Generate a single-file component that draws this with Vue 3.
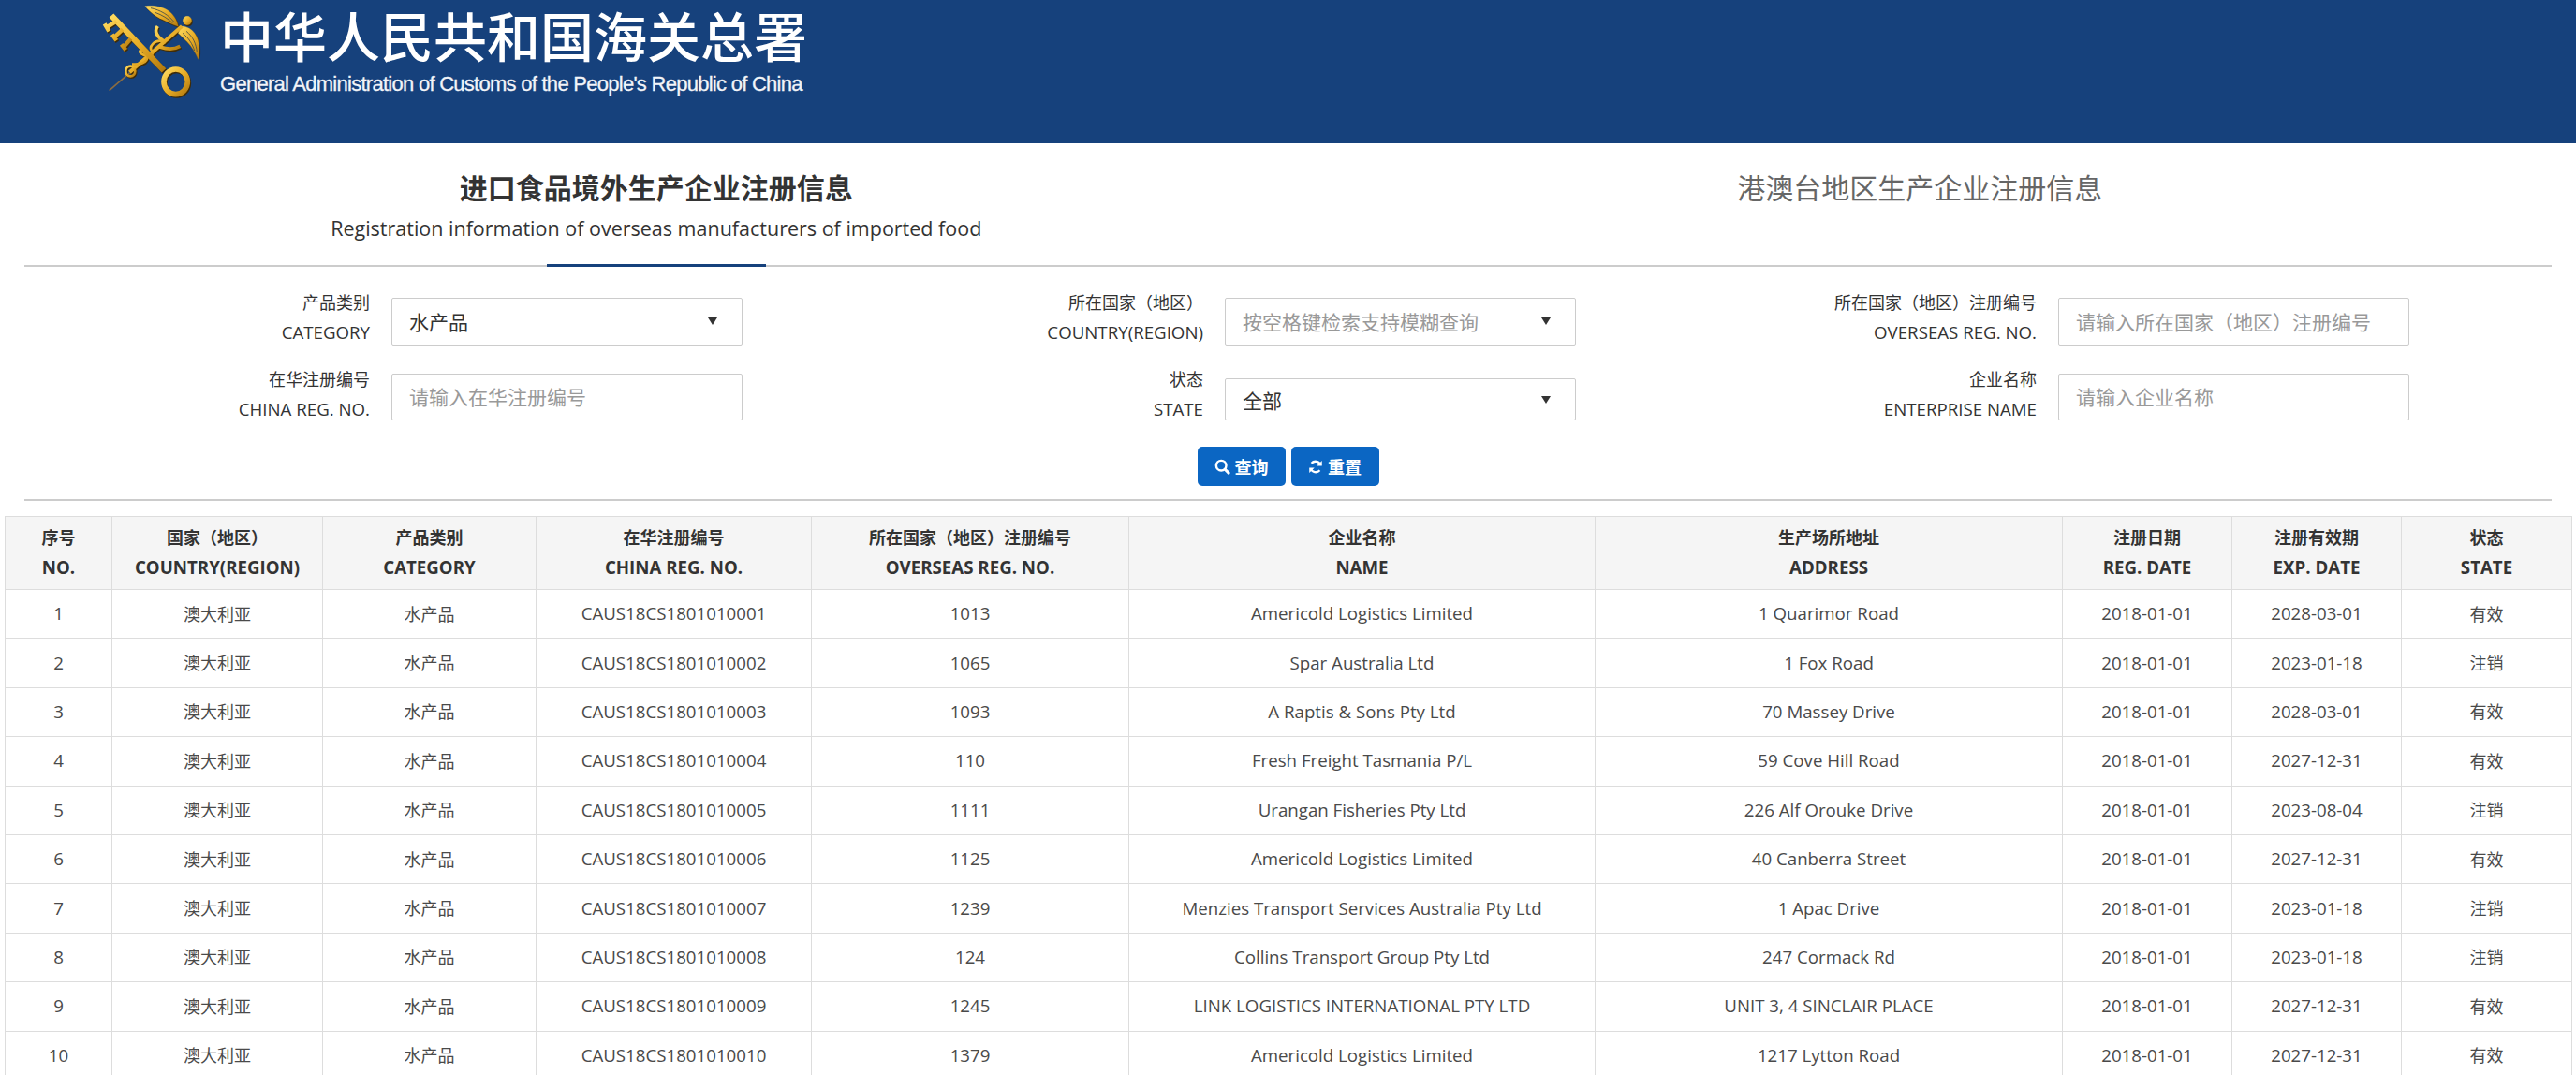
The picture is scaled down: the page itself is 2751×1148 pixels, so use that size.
<template>
  <div class="page">
    <header class="site-header">
      <svg class="logo" viewBox="0 0 330 330" width="110" height="110">
        <defs>
          <linearGradient id="gold" x1="0" y1="0" x2="1" y2="1">
            <stop offset="0" stop-color="#ffdc60" />
            <stop offset="0.55" stop-color="#e6aa24" />
            <stop offset="1" stop-color="#b27a10" />
          </linearGradient>
          <g id="emblem">
            <path d="M150 20C195 14 245 30 256 85C236 78 222 70 205 62C185 54 165 38 150 20Z" />
            <path d="M268 84C310 88 332 130 320 190C312 170 300 150 286 135C276 125 265 115 256 106Z" />
            <circle cx="285" cy="66" r="14" />
            <path d="M100 232L268 84" fill="none" stroke-width="12" />
            <path d="M190 84C178 100 186 118 216 136M262 148C240 160 222 158 196 150" fill="none" stroke-width="11" />
            <path d="M205 132C180 126 160 150 172 164C184 178 152 182 138 172C122 162 146 152 156 178C160 206 126 206 108 206" fill="none" stroke-width="8" />
            <ellipse cx="103" cy="228" rx="15" ry="16" fill="none" stroke-width="8" />
            <path d="M42 50L210 226" fill="none" stroke-width="19" />
            <path d="M58 68L26 88M78 94L50 120M104 124L80 152M20 76L34 100M44 110L58 130M74 142L88 160" fill="none" stroke-width="13" />
            <ellipse cx="248" cy="262" rx="38" ry="40" fill="none" stroke-width="17" />
          </g>
        </defs>
        <path d="M35 290L102 232" stroke="#8a6c42" stroke-width="5" fill="none" />
        <use href="#emblem" transform="translate(3 4)" fill="#3f2c08" stroke="#3f2c08" />
        <use href="#emblem" fill="url(#gold)" stroke="url(#gold)" />
        <path d="M168 26C198 32 226 48 244 72M182 40C204 48 224 60 238 74M282 100C302 116 314 140 316 168M270 106C290 122 302 142 308 162" fill="none" stroke="#5b5a45" stroke-width="3" />
      </svg>
      <div class="brand">
        <div class="brand-cn">中华人民共和国海关总署</div>
        <div class="brand-en">General Administration of Customs of the People's Republic of China</div>
      </div>
    </header>

    <nav class="tabs">
      <div class="tab active">
        <div class="tab-title">进口食品境外生产企业注册信息</div>
        <div class="tab-sub">Registration information of overseas manufacturers of imported food</div>
      </div>
      <div class="tab">
        <div class="tab-title">港澳台地区生产企业注册信息</div>
      </div>
    </nav>

    <form class="filters" @submit.prevent>
      <div v-for="f in fields" :key="f.cn" class="field">
        <label class="field-label">
          <span>{{ f.cn }}</span>
          <span class="latin">{{ f.en }}</span>
        </label>
        <div v-if="f.type === 'select'" class="control select" :class="f.cls">
          <span :class="{ hint: f.hint }">{{ f.value }}</span>
          <i class="caret"></i>
        </div>
        <input v-else class="control" :class="f.cls" type="text" :placeholder="f.value" />
      </div>
    </form>

    <div class="actions">
      <button class="btn" type="button">
        <svg viewBox="0 0 18 18" width="17" height="17">
          <circle cx="7.6" cy="7.6" r="5.6" fill="none" stroke="#fff" stroke-width="2.6" />
          <path d="M11.8 11.8L16 16" stroke="#fff" stroke-width="3.2" stroke-linecap="round" />
        </svg>
        查询
      </button>
      <button class="btn" type="button">
        <svg viewBox="0 0 18 18" width="16" height="17">
          <path d="M15 7A6.4 6.4 0 0 0 4 4.8" fill="none" stroke="#fff" stroke-width="2.6" />
          <path d="M3 11A6.4 6.4 0 0 0 14 13.2" fill="none" stroke="#fff" stroke-width="2.6" />
          <path d="M16.6 1.6V8H10.4Z" fill="#fff" />
          <path d="M1.4 16.4V10H7.6Z" fill="#fff" />
        </svg>
        重置
      </button>
    </div>

    <table class="grid">
      <colgroup>
        <col v-for="c in columns" :key="c.en" :style="{ width: c.width + 'px' }" />
      </colgroup>
      <thead>
        <tr>
          <th v-for="c in columns" :key="c.en">
            <div>{{ c.cn }}</div>
            <div class="latin">{{ c.en }}</div>
          </th>
        </tr>
      </thead>
      <tbody>
        <tr v-for="(r, i) in rows" :key="r[0]">
          <td class="latin">{{ i + 1 }}</td>
          <td>澳大利亚</td>
          <td>水产品</td>
          <td class="latin">{{ 'CAUS18CS18010100' + String(i + 1).padStart(2, '0') }}</td>
          <td v-for="(cell, j) in r.slice(0, 5)" :key="j" class="latin">{{ cell }}</td>
          <td>{{ r[5] }}</td>
        </tr>
      </tbody>
    </table>
  </div>
</template>

<script setup>
const fields = [
  { cn: '产品类别', en: 'CATEGORY', type: 'select', value: '水产品' },
  { cn: '所在国家（地区）', en: 'COUNTRY(REGION)', type: 'select', value: '按空格键检索支持模糊查询', hint: true },
  { cn: '所在国家（地区）注册编号', en: 'OVERSEAS REG. NO.', type: 'input', value: '请输入所在国家（地区）注册编号' },
  { cn: '在华注册编号', en: 'CHINA REG. NO.', type: 'input', value: '请输入在华注册编号', cls: 'second' },
  { cn: '状态', en: 'STATE', type: 'select', value: '全部', cls: 'short' },
  { cn: '企业名称', en: 'ENTERPRISE NAME', type: 'input', value: '请输入企业名称', cls: 'second' },
]

const columns = [
  { cn: '序号', en: 'NO.', width: 114 },
  { cn: '国家（地区）', en: 'COUNTRY(REGION)', width: 225 },
  { cn: '产品类别', en: 'CATEGORY', width: 228 },
  { cn: '在华注册编号', en: 'CHINA REG. NO.', width: 294 },
  { cn: '所在国家（地区）注册编号', en: 'OVERSEAS REG. NO.', width: 339 },
  { cn: '企业名称', en: 'NAME', width: 498 },
  { cn: '生产场所地址', en: 'ADDRESS', width: 499 },
  { cn: '注册日期', en: 'REG. DATE', width: 181 },
  { cn: '注册有效期', en: 'EXP. DATE', width: 181 },
  { cn: '状态', en: 'STATE', width: 182 },
]

const rows = [
  ['1013', 'Americold Logistics Limited', '1 Quarimor Road', '2018-01-01', '2028-03-01', '有效'],
  ['1065', 'Spar Australia Ltd', '1 Fox Road', '2018-01-01', '2023-01-18', '注销'],
  ['1093', 'A Raptis & Sons Pty Ltd', '70 Massey Drive', '2018-01-01', '2028-03-01', '有效'],
  ['110', 'Fresh Freight Tasmania P/L', '59 Cove Hill Road', '2018-01-01', '2027-12-31', '有效'],
  ['1111', 'Urangan Fisheries Pty Ltd', '226 Alf Orouke Drive', '2018-01-01', '2023-08-04', '注销'],
  ['1125', 'Americold Logistics Limited', '40 Canberra Street', '2018-01-01', '2027-12-31', '有效'],
  ['1239', 'Menzies Transport Services Australia Pty Ltd', '1 Apac Drive', '2018-01-01', '2023-01-18', '注销'],
  ['124', 'Collins Transport Group Pty Ltd', '247 Cormack Rd', '2018-01-01', '2023-01-18', '注销'],
  ['1245', 'LINK LOGISTICS INTERNATIONAL PTY LTD', 'UNIT 3, 4 SINCLAIR PLACE', '2018-01-01', '2027-12-31', '有效'],
  ['1379', 'Americold Logistics Limited', '1217 Lytton Road', '2018-01-01', '2027-12-31', '有效'],
]
</script>

<style>
html,
body {
  height: 100%;
  overflow: hidden;
  background: #fff;
}
</style>

<style scoped>
.page {
  font-family: 'Open Sans', 'Noto Sans CJK SC', sans-serif;
  font-size: 18px;
  color: #333;
}

.latin {
  font-size: 18.7px;
}

.site-header {
  display: flex;
  height: 153px;
  padding-left: 105px;
  background: #16417c;
}

.logo {
  flex: none;
  margin-right: 20px;
}

.brand-cn {
  height: 72px;
  font-family: 'Noto Sans CJK SC', sans-serif;
  font-size: 57px;
  font-weight: 500;
  line-height: 72px;
  color: #fff;
  white-space: nowrap;
}

.brand-en {
  font-family: 'Liberation Sans', sans-serif;
  font-size: 22px;
  line-height: 36px;
  letter-spacing: -0.73px;
  color: #f2f4f8;
  -webkit-text-stroke: 0.3px #f2f4f8;
  white-space: nowrap;
}

.tabs {
  display: grid;
  grid-template-columns: 1fr 1fr;
  height: 132px;
  margin: 0 26px;
  border-bottom: 2px solid #ccc;
  box-sizing: border-box;
}

.tab {
  position: relative;
  padding-top: 26px;
  text-align: center;
  color: #666;
}

.tab-title {
  font-family: 'Noto Sans CJK SC', sans-serif;
  font-size: 30px;
  line-height: 40px;
}

.tab-sub {
  font-size: 21.5px;
  line-height: 40px;
  margin-top: 5px;
}

.tab.active {
  color: #333;
}

.tab.active .tab-title {
  font-weight: 700;
}

.tab.active::after {
  content: '';
  position: absolute;
  left: 50%;
  bottom: -2px;
  width: 234px;
  height: 3px;
  margin-left: -117px;
  background: #16417c;
}

.filters {
  display: grid;
  grid-template-columns: repeat(3, 890px);
  grid-auto-rows: 82px;
  padding: 22px 0 0 175px;
}

.field {
  display: flex;
  align-items: flex-start;
}

.field-label {
  display: flex;
  flex-direction: column;
  flex: none;
  width: 220px;
  margin-right: 23px;
  line-height: 32px;
  text-align: right;
}

.control {
  display: block;
  width: 375px;
  height: 51px;
  margin-top: 11px;
  padding: 0 18px;
  border: 1px solid #ccc;
  border-radius: 2px;
  box-sizing: border-box;
  background: #fff;
  font-family: inherit;
  font-size: 21px;
  color: #333;
  outline: none;
}

.control::placeholder {
  color: #999;
}

.control.second {
  height: 50px;
  margin-top: 10px;
}

.control.short {
  height: 45px;
  margin-top: 15px;
}

.select {
  display: flex;
  align-items: center;
  justify-content: space-between;
  padding-right: 26px;
  padding-bottom: 2px;
}

.select.short {
  padding-bottom: 0;
}

.hint {
  color: #999;
}

.caret {
  width: 0;
  height: 0;
  border-top: 8px solid #333;
  border-left: 5.5px solid transparent;
  border-right: 5.5px solid transparent;
}

.actions {
  display: flex;
  justify-content: center;
  gap: 6px;
  height: 58px;
  margin: 6px 26px 16px;
  border-bottom: 2px solid #ccc;
  box-sizing: border-box;
}

.btn {
  display: flex;
  align-items: center;
  justify-content: center;
  gap: 5px;
  width: 94px;
  height: 42px;
  padding: 0;
  border: 0;
  border-radius: 5px;
  background: #0b66c3;
  font-family: 'Noto Sans CJK SC', sans-serif;
  font-size: 18px;
  font-weight: 700;
  color: #fff;
}

.grid {
  width: 2741px;
  margin-left: 5px;
  border-collapse: collapse;
  table-layout: fixed;
}

.grid th,
.grid td {
  padding: 0 0 2px;
  border: 1px solid #ddd;
  text-align: center;
}

.grid th {
  height: 75px;
  background: #f5f5f5;
  font-weight: 700;
  line-height: 32px;
  color: #333;
}

.grid td {
  height: 49.4px;
  color: #4a4a4a;
}
</style>
